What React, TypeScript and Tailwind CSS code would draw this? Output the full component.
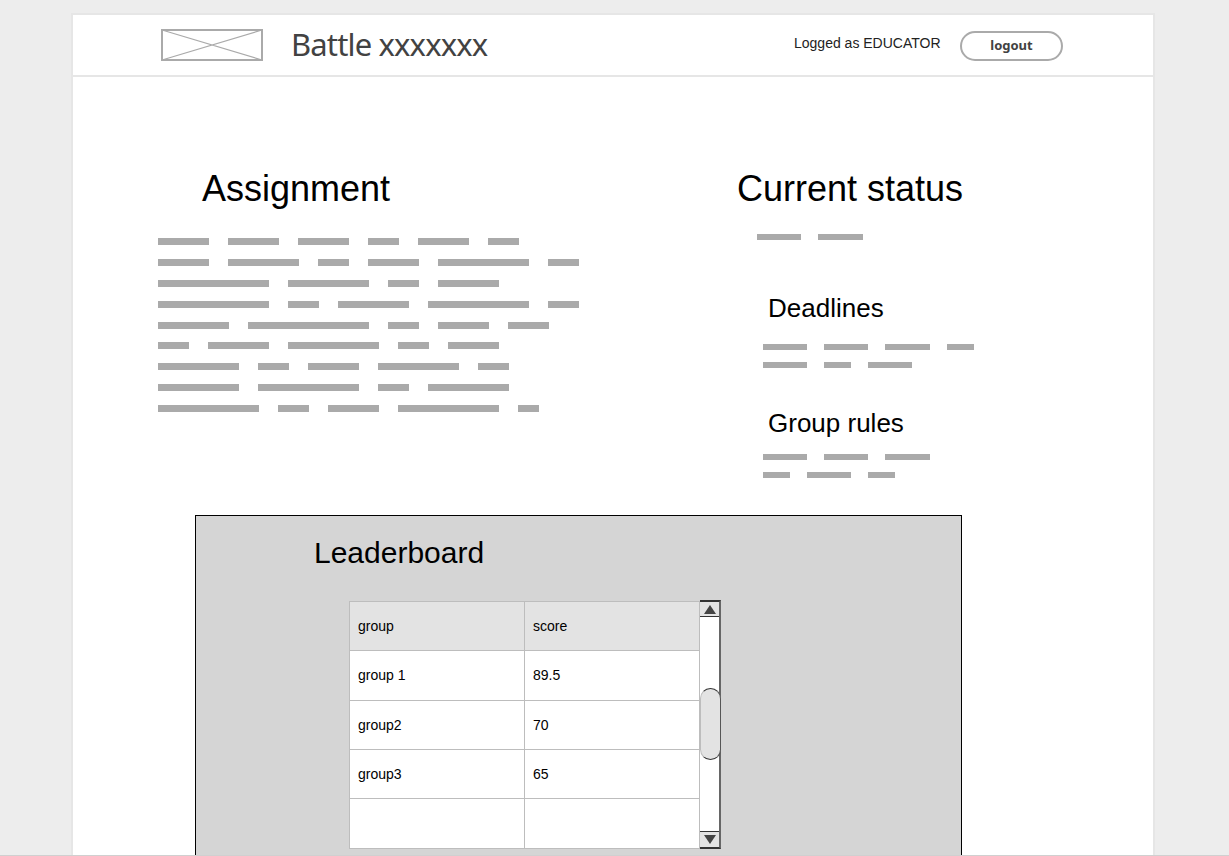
const assignmentRows = [
  [51, 51, 51, 31, 51, 31],
  [51, 71, 31, 51, 91, 31],
  [111, 81, 31, 61],
  [111, 31, 71, 101, 31],
  [71, 121, 31, 51, 41],
  [31, 61, 91, 31, 51],
  [81, 31, 51, 81, 31],
  [81, 101, 31, 81],
  [101, 31, 51, 101, 21],
]

const scores = [
  { group: 'group 1', score: '89.5', height: 'h-[50px]' },
  { group: 'group2', score: '70', height: 'h-[49px]' },
  { group: 'group3', score: '65', height: 'h-[49px]' },
  { group: '', score: '', height: 'h-[50px]' },
]

function Bars({ widths }: { widths: number[] }) {
  return (
    <div className="flex gap-[19px]">
      {widths.map((w, i) => (
        <div key={i} className="h-[7px] bg-[#aaaaaa]" style={{ width: w }} />
      ))}
    </div>
  )
}

function SmallBars({ widths }: { widths: number[] }) {
  return (
    <div className="flex gap-[17px]">
      {widths.map((w, i) => (
        <div key={i} className="h-[6px] bg-[#aaaaaa]" style={{ width: w }} />
      ))}
    </div>
  )
}

function Scrollbar() {
  return (
    <div className="flex h-[249px] w-[21px] flex-col border-t-2 border-r-2 border-b-2 border-t-[#333333] border-r-[#666666] border-b-[#333333] bg-white">
      <div className="flex h-[15px] items-center justify-center border-b border-[#333333] bg-[#e3e3e3]">
        <svg width="12" height="9" viewBox="0 0 12 9"><path d="M6 0 L12 9 L0 9 Z" fill="#444444" /></svg>
      </div>
      <div className="flex-1 pt-[71px]">
        <div className="mr-[-2px] h-[72px] rounded-[11px] border border-t-[#333333] border-r-[#555555] border-b-[#333333] border-l-[#bdbdbd] bg-[#e3e3e3]" />
      </div>
      <div className="flex h-[16px] items-center justify-center border-t border-[#333333] bg-[#e3e3e3]">
        <svg width="12" height="9" viewBox="0 0 12 9"><path d="M0 0 L12 0 L6 9 Z" fill="#444444" /></svg>
      </div>
    </div>
  )
}

export default function App() {
  return (
    <div className="h-[856px] overflow-hidden border-b border-[#d0d0d0] bg-[#ededed] px-[71px] pt-[13px] font-['Liberation_Sans',sans-serif] text-black">
      <div className="h-[900px] w-[1084px] border-2 border-[#e6e6e6] bg-white">
        <header className="flex h-[62px] items-center border-b-2 border-[#e6e6e6] pl-[88px]">
          <svg width="102" height="32" viewBox="0 0 102 32">
            <rect x="1" y="1" width="100" height="30" fill="none" stroke="#aaaaaa" strokeWidth="2" />
            <path d="M1 1 L101 31 M101 1 L1 31" stroke="#aaaaaa" strokeWidth="1.2" />
          </svg>
          <h1 className="mt-[-2px] ml-[28px] w-[503px] font-['Noto_Sans',sans-serif] text-[31px] leading-none tracking-[-0.85px] text-[#424242]">
            Battle xxxxxxx
          </h1>
          <span className="mt-[-3px] w-[166px] text-[14px] text-[#222222]">Logged as EDUCATOR</span>
          <button className="mt-[2px] flex h-[30px] w-[103px] items-center justify-center rounded-full border-2 border-[#aaaaaa] font-['Noto_Sans',sans-serif] text-[13px] font-bold text-[#424242]">
            logout
          </button>
        </header>

        <main className="pl-[85px]">
          <div className="flex">
            <section className="w-[579px] pt-[90px]">
              <h2 className="pl-[44px] text-[36px] leading-[44px]">Assignment</h2>
              <div className="mt-[27px] flex flex-col gap-[13.9px]">
                {assignmentRows.map((row, i) => (
                  <Bars key={i} widths={row} />
                ))}
              </div>
            </section>
            <section className="pt-[90px]">
              <h2 className="text-[36px] leading-[44px]">Current status</h2>
              <div className="mt-[23px] pl-[20px]">
                <SmallBars widths={[44, 45]} />
              </div>
              <div className="mt-[53px] pl-[26px]">
                <h3 className="pl-[5px] text-[26px] leading-[30px]">Deadlines</h3>
                <div className="mt-[21px] flex flex-col gap-[12px]">
                  <SmallBars widths={[44, 44, 45, 27]} />
                  <SmallBars widths={[44, 27, 44]} />
                </div>
                <h3 className="mt-[40px] pl-[5px] text-[26px] leading-[30px]">Group rules</h3>
                <div className="mt-[16px] flex flex-col gap-[12px]">
                  <SmallBars widths={[44, 44, 45]} />
                  <SmallBars widths={[27, 44, 27]} />
                </div>
              </div>
            </section>
          </div>

          <section className="ml-[37px] mt-[37px] h-[400px] w-[767px] border border-black bg-[#d5d5d5] pl-[118px] pt-[19px]">
            <h2 className="text-[30px] leading-[36px]">Leaderboard</h2>
            <div className="ml-[35px] mt-[29px] flex items-start">
              <table className="mt-[1px] w-[351px] table-fixed border-collapse bg-white text-[14px]">
                <thead className="bg-[#e3e3e3]">
                  <tr className="h-[49px]">
                    <th className="border border-[#bdbdbd] p-0 pl-[8px] text-left font-normal">group</th>
                    <th className="border border-[#bdbdbd] p-0 pl-[8px] text-left font-normal">score</th>
                  </tr>
                </thead>
                <tbody>
                  {scores.map((row, i) => (
                    <tr key={i} className={row.height}>
                      <td className="border border-[#bdbdbd] p-0 pl-[8px]">{row.group}</td>
                      <td className="border border-[#bdbdbd] p-0 pl-[8px]">{row.score}</td>
                    </tr>
                  ))}
                </tbody>
              </table>
              <Scrollbar />
            </div>
          </section>
        </main>
      </div>
    </div>
  )
}
